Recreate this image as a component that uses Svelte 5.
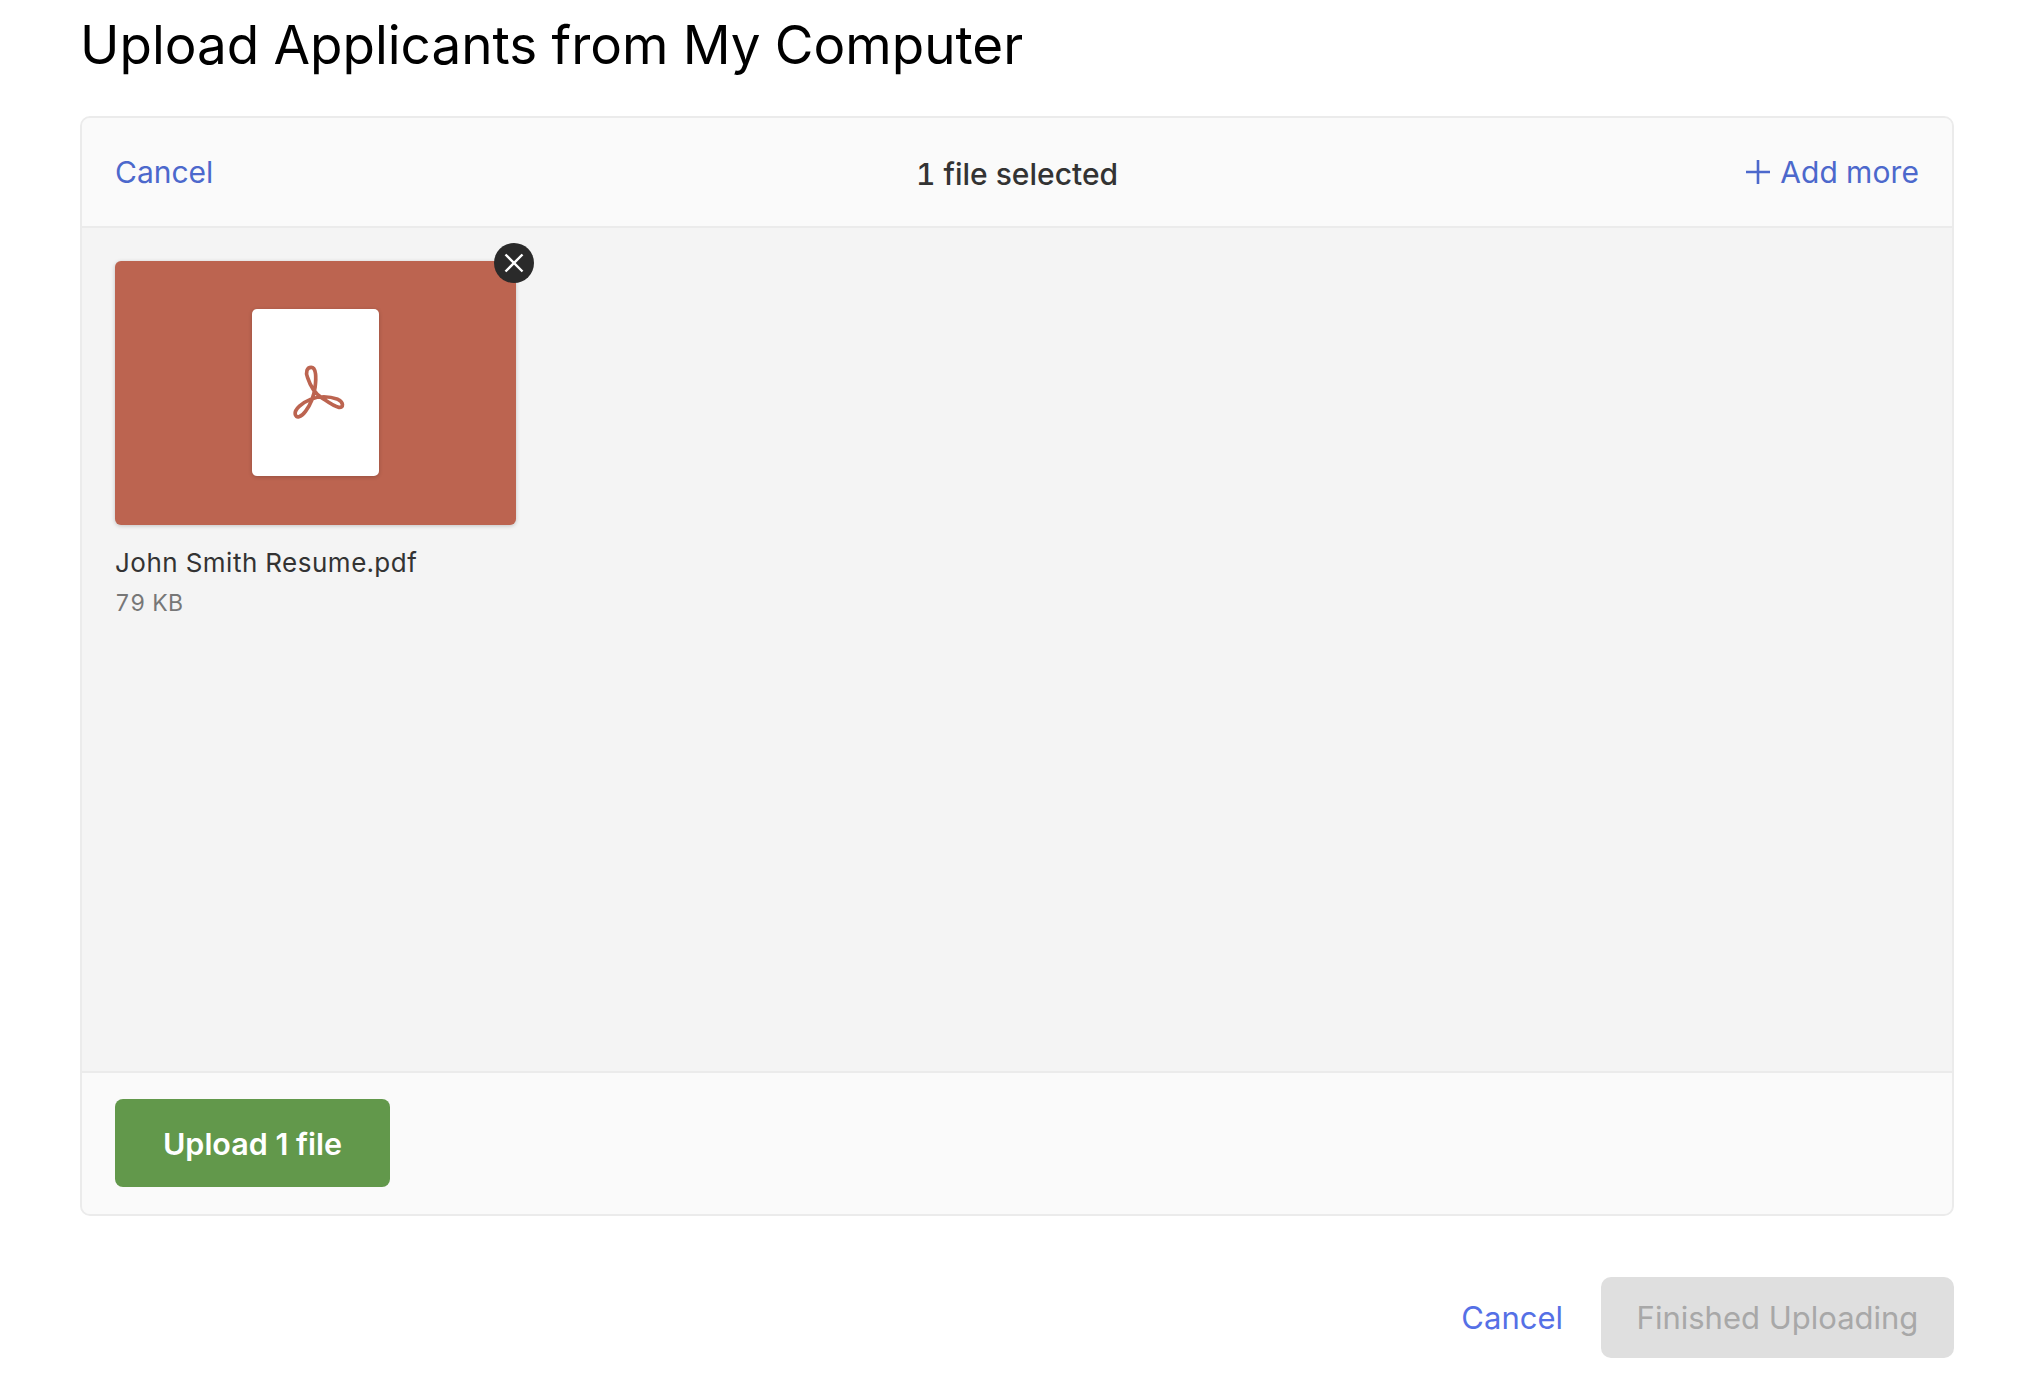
<script>
  const file = { name: 'John Smith Resume.pdf', size: '79 KB' };
</script>

<div class="page">
  <h1>Upload Applicants from My Computer</h1>

  <section class="card">
    <header class="bar top">
      <a class="link">Cancel</a>
      <span class="count">1 file selected</span>
      <a class="link add">
        <svg width="24" height="24" viewBox="0 0 24 24" aria-hidden="true"><path d="M12 0v24M0 12h24" fill="none" stroke="currentColor" stroke-width="2.6"/></svg>
        <span class="addtext">Add more</span>
      </a>
    </header>

    <div class="body">
      <div class="item">
        <div class="thumb">
          <div class="doc">
            <svg width="60" height="60" viewBox="16.5 69 180 180" aria-hidden="true">
              <path d="M92 82C79 82 75 96 81 112C89 136 100 158 122 172C140 184 160 200 175 202C190 204 190 186 172 178C150 170 120 166 90 178C65 188 42 208 44 222C46 236 62 232 75 214C90 194 100 170 104 140C107 115 108 82 92 82Z" fill="none" stroke="#bc6450" stroke-width="11"/>
            </svg>
          </div>
          <button class="remove" aria-label="Remove file">
            <svg width="20" height="20" viewBox="0 0 20 20" aria-hidden="true"><path d="M1.5 1.5l17 17M18.5 1.5l-17 17" fill="none" stroke="#fff" stroke-width="2.4"/></svg>
          </button>
        </div>
        <div class="name">{file.name}</div>
        <div class="size">{file.size}</div>
      </div>
    </div>

    <footer class="bar bottom">
      <button class="upload">Upload 1 file</button>
    </footer>
  </section>

  <div class="actions">
    <a class="cancel">Cancel</a>
    <button class="finish" disabled>Finished Uploading</button>
  </div>
</div>

<style>
  :global(body) {
    margin: 0;
    background: #fff;
    font-family: Inter, "Liberation Sans", sans-serif;
    font-variant-numeric: tabular-nums;
  }
  .page {
    width: 1874px;
    padding: 0 0 0 80px;
  }
  h1 {
    margin: 0;
    height: 116px;
    padding-top: 13px;
    box-sizing: border-box;
    font-size: 53px;
    line-height: 64px;
    font-weight: 400;
    color: #000;
  }
  .card {
    height: 1100px;
    box-sizing: border-box;
    border: 2px solid #ebebeb;
    border-radius: 10px;
    display: flex;
    flex-direction: column;
    background: #f4f4f4;
    overflow: hidden;
  }
  .bar { background: #fafafa; }
  .top {
    height: 110px;
    flex: none;
    box-sizing: border-box;
    border-bottom: 2px solid #ebebeb;
    padding: 0 33px;
    display: grid;
    grid-template-columns: 1fr auto 1fr;
    align-items: center;
  }
  .link {
    color: #4c68cc;
    font-size: 30px;
    line-height: 40px;
  }
  .add {
    justify-self: end;
    display: flex;
    align-items: center;
    gap: 10px;
  }
  .addtext { letter-spacing: 0.1px; }
  .count {
    font-size: 30px;
    font-weight: 500;
    color: #333;
    padding-top: 3px;
  }
  .body {
    flex: 1;
    padding: 33px;
  }
  .item { width: 401px; }
  .thumb {
    position: relative;
    height: 264px;
    background: #bc6450;
    border-radius: 6px;
    box-shadow: 0 1px 4px rgba(0,0,0,.2);
    display: flex;
    align-items: flex-start;
    justify-content: center;
    padding-top: 48px;
    box-sizing: border-box;
  }
  .doc {
    width: 127px;
    height: 167px;
    background: #fff;
    border-radius: 5px;
    box-shadow: 0 1px 4px rgba(0,0,0,.2);
    display: flex;
    align-items: center;
    justify-content: center;
  }
  .remove {
    position: absolute;
    top: -18px;
    right: -18px;
    width: 40px;
    height: 40px;
    padding: 0;
    border: 0;
    border-radius: 50%;
    background: #2a2a2a;
    display: flex;
    align-items: center;
    justify-content: center;
  }
  .name {
    margin-top: 21px;
    font-size: 26px;
    line-height: 34px;
    letter-spacing: 0.5px;
    color: #333;
    white-space: nowrap;
  }
  .size {
    margin-top: 8px;
    font-size: 23px;
    line-height: 30px;
    letter-spacing: 0.4px;
    color: #777;
  }
  .bottom {
    height: 143px;
    flex: none;
    box-sizing: border-box;
    border-top: 2px solid #ebebeb;
    padding: 26px 33px 0;
  }
  button { font-family: inherit; }
  .upload {
    width: 275px;
    height: 88px;
    border: 0;
    border-radius: 8px;
    background: #62984b;
    color: #fff;
    font-size: 30.5px;
    font-weight: 600;
  }
  .actions {
    margin-top: 61px;
    display: flex;
    justify-content: flex-end;
    align-items: center;
    gap: 38px;
  }
  .cancel {
    color: #5570e6;
    font-size: 31px;
  }
  .finish {
    width: 353px;
    height: 81px;
    border: 0;
    border-radius: 10px;
    background: #dfdfdf;
    color: #a8a8a8;
    font-size: 31px;
    font-weight: 400;
  }
</style>
